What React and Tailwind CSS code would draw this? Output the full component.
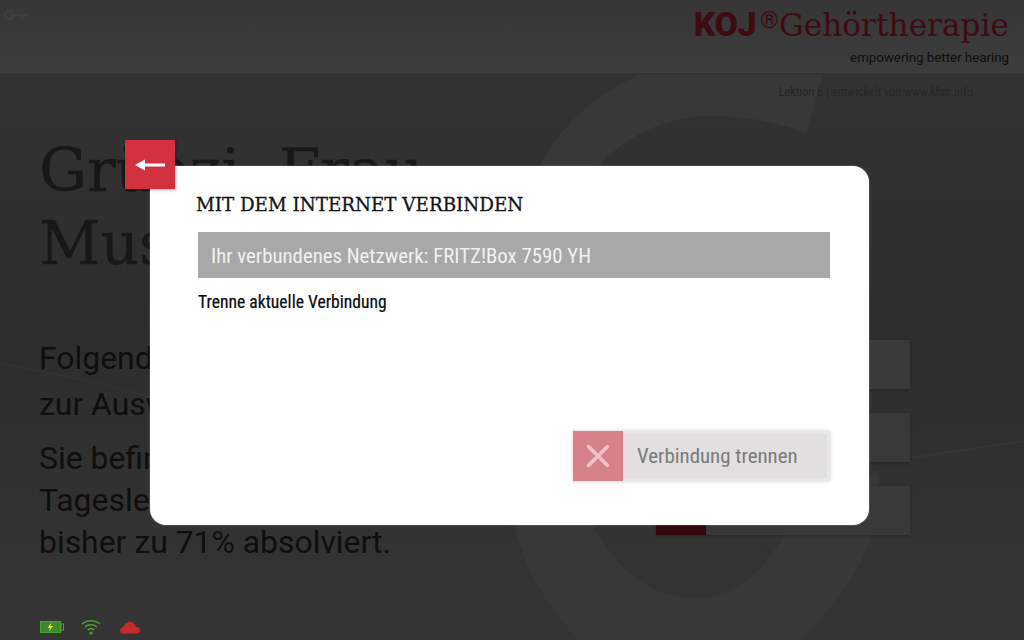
import { X } from 'lucide-react'

const sans = 'font-["Roboto",sans-serif]'

function StatusIcons() {
  return (
    <div className="flex items-center h-[14px] mt-auto mb-[6px] ml-[40px]">
      {/* battery */}
      <svg width="24" height="14" viewBox="0 0 24 14">
        <rect x="0.5" y="1.5" width="20" height="11" fill="#3c8a2b" stroke="#4ca032" />
        <rect x="21" y="4" width="2.5" height="6" fill="none" stroke="#4ca032" strokeWidth="1" />
        <path d="M11.5 2.5 L7.5 8 H10 L9 11.5 L13 6 H10.5 Z" fill="#e6e03a" />
      </svg>
      {/* wifi */}
      <svg width="20" height="16" viewBox="0 0 20 16" fill="none" stroke="#4ca032" strokeWidth="1.6" className="ml-[17px]">
        <path d="M1.2 5 C6 0.6 14 0.6 18.8 5" />
        <path d="M4 8 C7.5 5 12.5 5 16 8" />
        <path d="M6.8 11 C8.8 9.4 11.2 9.4 13.2 11" />
        <circle cx="10" cy="14" r="0.8" fill="#4ca032" />
      </svg>
      {/* cloud */}
      <svg width="20" height="13" viewBox="0 0 20 13" className="ml-[19px]">
        <path d="M3.5 12.5 C1 12.5 0 11 0 9.5 C0 7.8 1.5 6.5 3.2 6.6 C3.8 3 6.8 0.8 9.8 0.8 C12.8 0.8 15 3 15.8 5.8 C18 5.8 20 7.2 20 9.4 C20 11.2 18.6 12.5 16.8 12.5 Z" fill="#c62a2a" />
      </svg>
    </div>
  )
}

function MenuRow({ red }) {
  return (
    <div className="flex h-[49px] shadow-[0_1px_3px_rgba(0,0,0,0.25)]">
      <div className={red ? 'w-[50px] bg-[#33070b]' : 'w-[50px] bg-[#393939]'} />
      <div className="flex-1 bg-[#393939]" />
    </div>
  )
}

export default function App() {
  return (
    <div className={`${sans} relative w-[1024px] h-[640px] overflow-hidden bg-gradient-to-b from-[#343434] via-[#2d2d2d] to-[#353535]`}>
      {/* big ear shape in the background */}
      <svg className="absolute inset-0" width="1024" height="640" viewBox="0 0 1024 640">
        <path
          d="M823 75 L806 133 C770 120 740 116 712 116 C660 116 620 140 590 175 C575 250 575 430 594 527 C620 575 655 598 695 598 C735 598 765 570 785 533 L878 470 C885 540 850 590 800 640 L579 640 C530 590 505 530 505 440 L520 220 C535 150 580 100 640 75 Z"
          fill="#383838"
        />
        <path d="M0 363 C60 375 110 385 150 397" stroke="#343434" strokeWidth="1.5" fill="none" />
        <path d="M912 458 C950 452 990 446 1024 441" stroke="#373737" strokeWidth="1.5" fill="none" />
      </svg>

      <div className="relative flex flex-col h-full">
        <header className="h-[74px] shrink-0 flex justify-between bg-gradient-to-b from-[#363636] to-[#3d3d3d] border-b border-[#333333] pl-[3px] pr-[15px]">
          {/* key glyph top left, hardly visible */}
          <svg width="25" height="12" viewBox="0 0 25 12" fill="none" stroke="#3f3f3f" strokeWidth="2" className="mt-[9px]">
            <circle cx="6" cy="6" r="4" />
            <path d="M10 6 H24 M19 6 V10 M23 6 V9" />
          </svg>
          <div className="flex flex-col items-end pt-[5px]">
            <div className="flex items-baseline h-[38px] leading-[38px] text-[#400b10]">
              <span className={`${sans} font-black text-[34px] tracking-[-0.5px]`}>KOJ</span>
              <span className={`${sans} text-[24px] ml-[4px] self-start leading-[30px]`}>®</span>
              <span className='font-["DejaVu_Serif",serif] text-[31.2px]'>Gehörtherapie</span>
            </div>
            <div className="text-[13.3px] leading-[20px] mt-[5px] text-[#0d0d0d]">empowering better hearing</div>
          </div>
        </header>

        <div className="self-end mr-[51px] mt-[10px] text-[12.25px] leading-[16px] font-stretch-condensed text-[#262626]">
          Lektion 6 | entwickelt von www.khrc.info
        </div>

        <main className="flex pl-[39px] pr-[114px] justify-between">
          <div className="w-[600px] text-[#181818]">
            <h1 className='font-["DejaVu_Serif",serif] font-normal [-webkit-text-stroke:0.4px_#181818] text-[60px] leading-[73px] mt-[34px]'>
              Grüezi, Frau
              <br />
              Muster
            </h1>
            <p className="text-[31.9px] leading-[46px] mt-[55px] text-[#0e0e0e]">
              Folgende Übungen stehen
              <br />
              zur Auswahl:
            </p>
            <p className="text-[31.9px] leading-[42px] mt-[10px] text-[#0e0e0e]">
              Sie befinden sich in der
              <br />
              Tageslektion 6 und haben
              <br />
              bisher zu 71% absolviert.
            </p>
          </div>
          <div className="w-[254px] flex flex-col gap-[24px] mt-[240px]">
            <MenuRow />
            <MenuRow />
            <MenuRow red />
          </div>
        </main>

        <StatusIcons />
      </div>

      {/* modal */}
      <div className="absolute left-[150px] top-[166px] w-[719px] h-[359px] bg-white rounded-[16px] pl-[46px] pr-[39px] pt-[26px] flex flex-col shadow-[0_0_2px_rgba(255,255,255,0.4)]">
        <h2 className='font-["DejaVu_Serif",serif] [-webkit-text-stroke:0.3px_#141414] text-[18.3px] leading-[26px] text-[#141414]'>MIT DEM INTERNET VERBINDEN</h2>
        <div className="ml-[2px] mt-[14px] h-[46px] flex items-center bg-[#a7a9a8] pl-[13px] pt-[3px] text-[20.8px] font-stretch-condensed text-[#f1f1f1]">
          Ihr verbundenes Netzwerk: FRITZ!Box 7590 YH
        </div>
        <p className="ml-[2px] mt-[14px] text-[17.6px] leading-[20px] font-normal font-stretch-condensed text-[#0c0c0c] [-webkit-text-stroke:0.2px_#0c0c0c]">Trenne aktuelle Verbindung</p>
        <button className="self-end mt-auto mb-[44px] w-[257px] h-[50px] flex items-center bg-[#e1dfe0] shadow-[inset_0_0_0_3px_#e9e8e8,0_0_4px_rgba(0,0,0,0.2)]">
          <span className="w-[50px] h-[50px] flex items-center justify-center bg-[#d6808a]">
            <X size={38} strokeWidth={2.2} className="text-[#f0c4c9]" />
          </span>
          <span className="ml-[14px] pt-[2px] text-[20.9px] font-stretch-condensed text-[#7a7a7a]">Verbindung trennen</span>
        </button>
      </div>

      {/* back button sits over the modal corner */}
      <button className="absolute left-[125px] top-[140px] w-[50px] h-[49px] flex items-center justify-center bg-[#d2323f] shadow-[1px_1px_3px_rgba(0,0,0,0.3)]">
        <svg width="30" height="14" viewBox="0 0 30 14">
          <path d="M0 7 L10 1.5 V5.5 H30 V8.5 H10 V12.5 Z" fill="#ffffff" />
        </svg>
      </button>
    </div>
  )
}
